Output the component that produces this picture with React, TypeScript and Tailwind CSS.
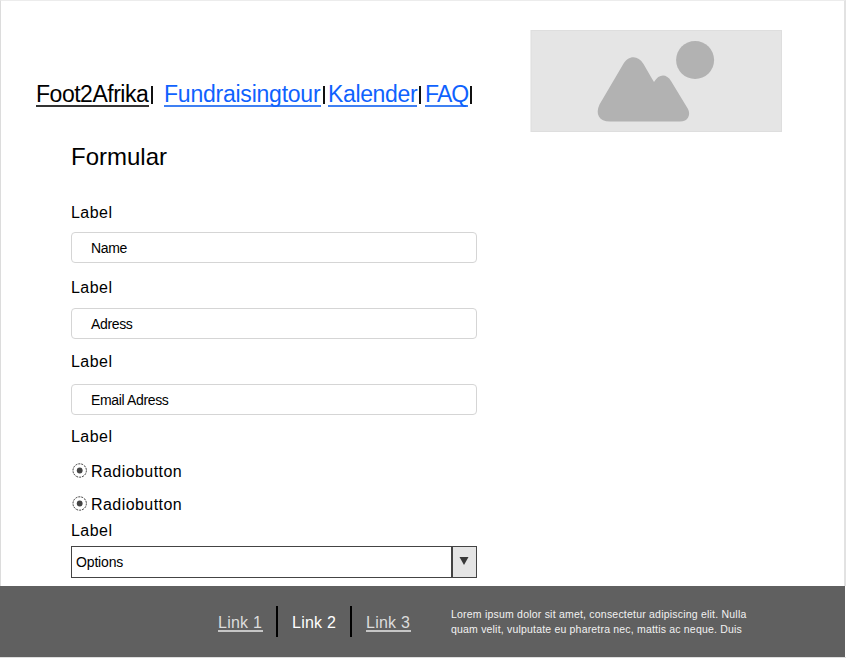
import type { ReactNode } from "react";

function Label({ children, className }: { children: ReactNode; className: string }) {
  return <div className={`h-[18px] text-[16px] leading-[18px] tracking-[0.45px] ${className}`}>{children}</div>;
}

function Field({ text, className }: { text: string; className: string }) {
  return (
    <div className={`h-[31px] w-[406px] rounded-[4px] border border-[#d5d5d5] pl-[19px] text-[14px] leading-[31px] tracking-[-0.35px] ${className}`}>
      {text}
    </div>
  );
}

function Radio({ className }: { className: string }) {
  return (
    <div className={`flex h-[18px] items-center text-[16px] leading-[18px] tracking-[0.44px] ${className}`}>
      <svg className="mr-[4px] h-[16px] w-[16px] shrink-0 -translate-y-[1.5px]" viewBox="0 0 16 16">
        <circle cx="8.700" cy="8" r="6.700" fill="none" stroke="#333" strokeWidth="1" strokeDasharray="2 1" />
        <circle cx="8.700" cy="8" r="2.900" fill="#444" />
      </svg>
      Radiobutton
    </div>
  );
}

function Bar() {
  return <span className="mt-[5px] ml-[2px] h-[18px] w-[2px] shrink-0 bg-[#111]" />;
}

export default function App() {
  return (
    <div className="flex h-[658px] w-[846px] flex-col overflow-hidden bg-white font-['Liberation_Sans',Arial,sans-serif] whitespace-nowrap text-black">
      <main className="flex h-[586px] border-t border-r-2 border-l border-t-[#ececec] border-r-[#e2e2e2] border-l-[#dcdcdc]">
        <section className="w-[529px] shrink-0 pt-[80px]">
          <nav className="flex h-[28px] pl-[35px]">
            <a className="h-[26px] w-[113px] shrink-0 border-b-2 border-[#333] text-[23px] leading-[26px] tracking-[-0.48px]">Foot2Afrika</a>
            <Bar />
            <a className="ml-[11px] h-[26px] w-[157px] shrink-0 border-b-2 border-[#3f80f3] text-[23px] leading-[26px] tracking-[-0.23px] text-[#0f62fe]">Fundraisingtour</a>
            <Bar />
            <a className="ml-[3px] h-[26px] w-[89px] shrink-0 border-b-2 border-[#3f80f3] text-[23px] leading-[26px] tracking-[-0.36px] text-[#0f62fe]">Kalender</a>
            <Bar />
            <a className="ml-[4px] h-[26px] w-[43px] shrink-0 border-b-2 border-[#3f80f3] text-[23px] leading-[26px] tracking-[-0.9px] text-[#0f62fe]">FAQ</a>
            <Bar />
          </nav>
          <form className="pl-[70px]">
            <h1 className="mt-[34px] h-[28px] text-[24px] leading-[28px]">Formular</h1>
            <Label className="mt-[33px]">Label</Label>
            <Field className="mt-[10px]" text="Name" />
            <Label className="mt-[16px]">Label</Label>
            <Field className="mt-[11px]" text="Adress" />
            <Label className="mt-[14px]">Label</Label>
            <Field className="mt-[13px]" text="Email Adress" />
            <Label className="mt-[13px]">Label</Label>
            <Radio className="mt-[17px]" />
            <Radio className="mt-[15px]" />
            <Label className="mt-[8px]">Label</Label>
            <div className="mt-[6px] flex h-[32px] w-[406px] border border-[#444]">
              <span className="flex-1 pl-[4px] text-[14px] leading-[31px] tracking-[-0.15px]">Options</span>
              <span className="flex w-[25px] items-center justify-center border-l-2 border-[#444] bg-[#e5e5e5]">
                <svg className="h-[8px] w-[10px] -translate-x-px -translate-y-px" viewBox="0 0 10 8"><path d="M.5 0H9.500L5 8Z" fill="#393939" /></svg>
              </span>
            </div>
          </form>
        </section>
        <svg className="mt-[29px] h-[102px] w-[252px] shrink-0" viewBox="0 0 252 102">
          <rect x="1" y=".5" width="250.500" height="101" fill="#e5e5e5" stroke="#dedede" />
          <circle cx="165.100" cy="30" r="19" fill="#b2b2b2" />
          <path transform="translate(1 0)" d="M79 91.500C68 91.500 64 84 68.500 74.500L92 34.500C97.500 25 107 25 112.500 34L120 47L123 52C128 43.500 135.500 43.500 140 51L157 79C160 85 157 91.500 149 91.500Z" fill="#b2b2b2" />
        </svg>
      </main>
      <footer className="mr-px flex h-[71px] bg-[#606060] pl-[218px] text-[16px] text-white">
        <a className="mt-[28px] h-[18px] w-[45px] border-b-2 border-[#c6c6c6] leading-[18px] tracking-[0.25px] text-[#dcdcdc]">Link 1</a>
        <span className="mt-[20px] ml-[13px] h-[31px] w-[2px] bg-black" />
        <a className="mt-[28px] ml-[14px] w-[45px] leading-[18px] tracking-[0.25px]">Link 2</a>
        <span className="mt-[20px] ml-[13px] h-[31px] w-[2px] bg-black" />
        <a className="mt-[28px] ml-[14px] h-[18px] w-[45px] border-b-2 border-[#c6c6c6] leading-[18px] tracking-[0.25px] text-[#dcdcdc]">Link 3</a>
        <p className="mt-[21px] ml-[40px] text-[10.5px] leading-[15px] text-[#f2f2f2]">
          <span className="block tracking-[0.21px]">Lorem ipsum dolor sit amet, consectetur adipiscing elit. Nulla</span>
          <span className="block tracking-[0.19px]">quam velit, vulputate eu pharetra nec, mattis ac neque. Duis</span>
        </p>
      </footer>
      <div className="h-px bg-[#dedede]" />
    </div>
  );
}
